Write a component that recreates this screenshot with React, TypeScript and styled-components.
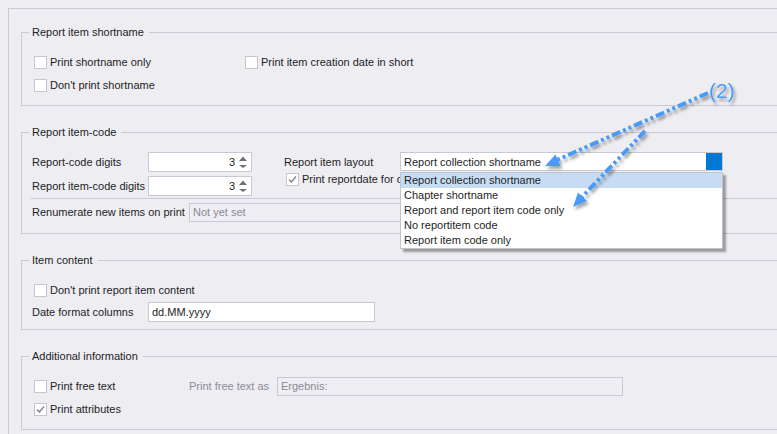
import React from "react";
import styled, { createGlobalStyle } from "styled-components";

const GlobalStyle = createGlobalStyle`
  html, body {
    margin: 0;
    padding: 0;
    background: #ededf2;
    overflow: hidden;
  }
  body {
    font-family: "Liberation Sans", Arial, sans-serif;
    font-size: 11px;
    color: #1e1e1e;
  }
`;

const line = "#cac9d8";

const Page = styled.div`
  position: relative;
  width: 777px;
  height: 434px;
  padding: 8px 0 0 8px;
  box-sizing: border-box;
  overflow: hidden;
`;

const Panel = styled.div`
  width: 800px;
  height: 440px;
  border-left: 1px solid ${line};
  border-top: 1px solid ${line};
  padding: 16px 0 0 12px;
  box-sizing: border-box;
  display: flex;
  flex-direction: column;
  gap: 19px;
`;

const Group = styled.fieldset`
  margin: 0;
  padding: 0;
  min-width: 0;
  border: 1px solid ${line};
`;

const Legend = styled.legend`
  margin-left: 7px;
  padding: 0 5px 0 3px;
  line-height: 14px;
  font-size: 11px;
`;

const Body = styled.div<{ $pad: string }>`
  padding: ${(p) => p.$pad};
  display: flex;
  flex-direction: column;
  gap: 3px;
`;

const Grid = styled.div<{ $cols: string; $gap?: number }>`
  display: grid;
  grid-template-columns: ${(p) => p.$cols};
  grid-auto-rows: 20px;
  row-gap: ${(p) => p.$gap ?? 3}px;
  align-items: center;
`;

const CheckRow = styled.label<{ $h?: number; $span?: boolean }>`
  display: flex;
  align-items: center;
  gap: 3px;
  height: ${(p) => p.$h ?? 20}px;
  white-space: nowrap;
  grid-column: ${(p) => (p.$span ? "1 / span 2" : "auto")};
`;

const Box = styled.span`
  width: 13px;
  height: 13px;
  margin-left: 2px;
  box-sizing: border-box;
  border: 1px solid #c5c5d3;
  background: #fff;
  display: inline-flex;
  align-items: center;
  justify-content: center;
  flex: none;
`;

const Label = styled.span<{ $muted?: boolean }>`
  white-space: nowrap;
  color: ${(p) => (p.$muted ? "#8c8c98" : "#1e1e1e")};
`;

const Field = styled.div<{ $w: number; $h?: number; $disabled?: boolean }>`
  width: ${(p) => p.$w}px;
  height: ${(p) => p.$h ?? 19}px;
  box-sizing: border-box;
  border: 1px solid #c9c8d6;
  background: ${(p) => (p.$disabled ? "#efeef3" : "#fff")};
  color: ${(p) => (p.$disabled ? "#8a8a94" : "#1e1e1e")};
  padding: 0 3px;
  display: flex;
  align-items: center;
  white-space: nowrap;
`;

const SpinBox = styled.div`
  width: 104px;
  height: 20px;
  box-sizing: border-box;
  border: 1px solid #c9c8d6;
  background: #fff;
  display: flex;
  align-items: center;
  padding: 0 3px 0 4px;
`;

const SpinValue = styled.span`
  flex: 1;
  text-align: right;
`;

const SpinArrows = styled.svg`
  width: 10px;
  height: 16px;
  margin-left: 3px;
  flex: none;
`;

const Split = styled.div`
  display: grid;
  grid-template-columns: 220px auto;
  column-gap: 32px;
  align-items: start;
`;

const LayoutGrid = styled.div`
  display: grid;
  grid-template-columns: 116px 323px;
  grid-template-rows: 20px 14px;
  align-items: center;
`;

const Separator = styled.div`
  height: 1px;
  background: ${line};
  margin: -1px 0 0 -1px;
`;

const ComboWrap = styled.div`
  position: relative;
  align-self: start;
`;

const Combo = styled.div`
  height: 19px;
  box-sizing: border-box;
  border: 1px solid #c9c8d6;
  background: #fff;
  display: flex;
  align-items: center;
  padding-left: 3px;
`;

const ComboText = styled.span`
  flex: 1;
  white-space: nowrap;
`;

const ComboButton = styled.span`
  width: 16px;
  align-self: stretch;
  background: #0078d4;
`;

const DropList = styled.ul`
  position: absolute;
  top: 20px;
  left: 0;
  width: 323px;
  margin: 0;
  padding: 0;
  list-style: none;
  box-sizing: border-box;
  border: 1px solid #c3c2d0;
  background: #fff;
  box-shadow: 3px 3px 2px rgba(0, 0, 0, 0.35);
  z-index: 2;
`;

const DropItem = styled.li<{ $active?: boolean }>`
  height: 15px;
  line-height: 15px;
  padding-left: 3px;
  white-space: nowrap;
  background: ${(p) => (p.$active ? "#c6dcf2" : "transparent")};
`;

const Overlay = styled.svg`
  position: absolute;
  left: 0;
  top: 0;
  pointer-events: none;
  z-index: 3;
`;

function Check({ checked }: { checked?: boolean }) {
  return (
    <Box>
      {checked && (
        <svg width="11" height="11" viewBox="0 0 11 11">
          <path d="M2 5.5 L4.3 8 L9 2.5" fill="none" stroke="#8b8b8b" strokeWidth="1.5" />
        </svg>
      )}
    </Box>
  );
}

function CheckItem({ label, checked }: { label: string; checked?: boolean }) {
  return (
    <CheckRow>
      <Check checked={checked} />
      <Label>{label}</Label>
    </CheckRow>
  );
}

function Spin({ value }: { value: number }) {
  return (
    <SpinBox>
      <SpinValue>{value}</SpinValue>
      <SpinArrows viewBox="0 0 10 16">
        <path d="M1 7 L5 2.5 L9 7 Z" fill="#707070" />
        <path d="M1 11 L9 11 L5 14 Z" fill="#707070" />
      </SpinArrows>
    </SpinBox>
  );
}

const layouts = [
  "Report collection shortname",
  "Chapter shortname",
  "Report and report item code only",
  "No reportitem code",
  "Report item code only",
];

function Callout() {
  const blue = "#4a9bf5";
  return (
    <Overlay width="777" height="434" viewBox="0 0 777 434">
      <defs>
        <filter id="drop" x="-10%" y="-10%" width="130%" height="140%">
          <feDropShadow dx="2" dy="3" stdDeviation="1.4" floodColor="#000" floodOpacity="0.35" />
        </filter>
      </defs>
      <g filter="url(#drop)">
        <path
          d="M708 93 L557 160"
          stroke={blue}
          strokeWidth="4"
          fill="none"
          strokeDasharray="9 3 3 3 3 3"
        />
        <path
          d="M645 131 L582 197"
          stroke={blue}
          strokeWidth="4"
          fill="none"
          strokeDasharray="9 3 3 3 3 3"
        />
        <path d="M545 166 L560.5 166 L555.5 154.5 Z" fill={blue} />
        <path d="M573 207 L587 201 L578 192.5 Z" fill={blue} />
        <text
          x="709"
          y="98"
          fill={blue}
          fontSize="21"
          fontFamily="'Liberation Sans', Arial, sans-serif"
        >
          (2)
        </text>
      </g>
    </Overlay>
  );
}

export default function App() {
  return (
    <>
      <GlobalStyle />
      <Page>
        <Panel>
          <Group>
            <Legend>Report item shortname</Legend>
            <Body $pad="13px 0 10px 10px">
              <Grid $cols="211px auto">
                <CheckItem label="Print shortname only" />
                <CheckItem label="Print item creation date in short" />
                <CheckItem label="Don't print shortname" />
              </Grid>
            </Body>
          </Group>

          <Group>
            <Legend>Report item-code</Legend>
            <Body $pad="13px 0 11px 10px">
              <Split>
                <Grid $cols="116px 104px" $gap={4}>
                  <Label>Report-code digits</Label>
                  <Spin value={3} />
                  <Label>Report item-code digits</Label>
                  <Spin value={3} />
                </Grid>
                <LayoutGrid>
                  <Label>Report item layout</Label>
                  <ComboWrap>
                    <Combo>
                      <ComboText>Report collection shortname</ComboText>
                      <ComboButton />
                    </Combo>
                    <DropList>
                      {layouts.map((item, i) => (
                        <DropItem key={item} $active={i === 0}>
                          {item}
                        </DropItem>
                      ))}
                    </DropList>
                  </ComboWrap>
                  <CheckRow $h={14} $span>
                    <Check checked />
                    <Label>Print reportdate for collection</Label>
                  </CheckRow>
                </LayoutGrid>
              </Split>
              <Separator />
              <Grid $cols="157px 534px">
                <Label>Renumerate new items on print</Label>
                <Field $w={534} $disabled>
                  Not yet set
                </Field>
              </Grid>
            </Body>
          </Group>

          <Group>
            <Legend>Item content</Legend>
            <Body $pad="13px 0 7px 10px">
              <CheckItem label="Don't print report item content" />
              <Grid $cols="116px 227px" style={{ marginTop: -1 }}>
                <Label>Date format columns</Label>
                <Field $w={227} $h={20}>
                  dd.MM.yyyy
                </Field>
              </Grid>
            </Body>
          </Group>

          <Group>
            <Legend>Additional information</Legend>
            <Body $pad="13px 0 10px 10px">
              <Grid $cols="157px 88px 346px">
                <CheckItem label="Print free text" />
                <Label $muted>Print free text as</Label>
                <Field $w={346} $disabled>
                  Ergebnis:
                </Field>
                <CheckItem label="Print attributes" checked />
              </Grid>
            </Body>
          </Group>
        </Panel>
        <Callout />
      </Page>
    </>
  );
}
